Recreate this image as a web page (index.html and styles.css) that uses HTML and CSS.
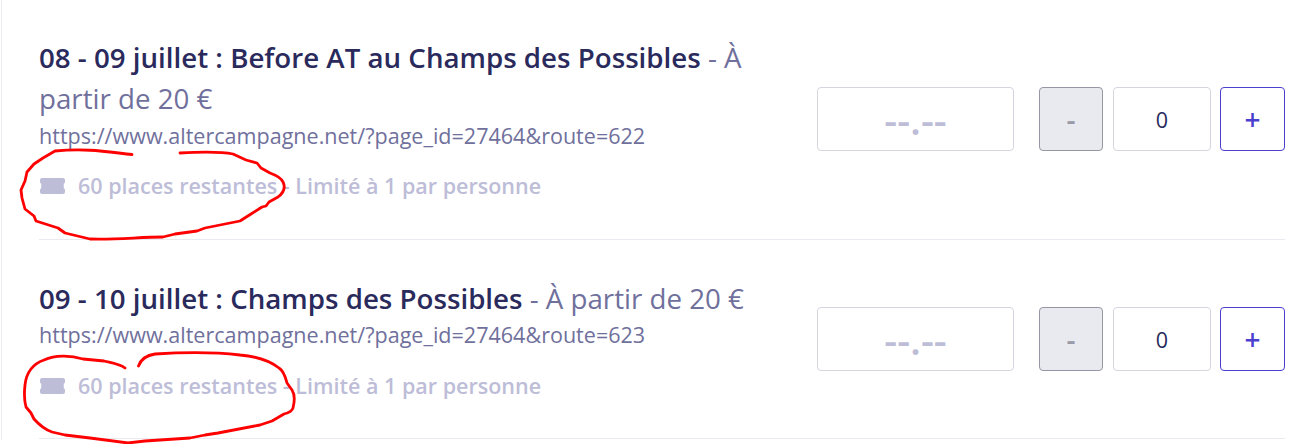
FILE: index.html
```
<!DOCTYPE html>
<html lang="fr">
    <head>
        <meta charset="utf-8">
        <title>Billetterie</title>
        <link rel="stylesheet" href="styles.css">
    </head>
    <body>
        <div class="tickets">
            <div class="ticket first">
                <div class="infos">
                    <div class="title"><strong>08 - 09 juillet : Before AT au Champs des Possibles</strong> - À partir de 20 €</div>
                    <div class="description">https://www.altercampagne.net/?page_id=27464&amp;route=622</div>
                    <div class="stock">
                        <svg class="icon" viewBox="0 0 25 16"><path d="M2 0H23Q25 0 25 2V4.500Q23 5.500 23.800 8Q23 10.500 25 11.500V14Q25 16 23 16H2Q0 16 0 14V11.500Q2 10.500 1.200 8Q2 5.500 0 4.500V2Q0 0 2 0Z"/></svg>
                        <span>60 places restantes - Limité à 1 par personne</span>
                    </div>
                </div>
                <input class="price" type="text" placeholder="--.--">
                <div class="quantity">
                    <button class="minus" type="button" disabled>-</button>
                    <input class="count" type="text" value="0">
                    <button class="plus" type="button">+</button>
                </div>
            </div>
            <div class="ticket">
                <div class="infos">
                    <div class="title"><strong>09 - 10 juillet : Champs des Possibles</strong> - À partir de 20 €</div>
                    <div class="description">https://www.altercampagne.net/?page_id=27464&amp;route=623</div>
                    <div class="stock">
                        <svg class="icon" viewBox="0 0 25 16"><path d="M2 0H23Q25 0 25 2V4.500Q23 5.500 23.800 8Q23 10.500 25 11.500V14Q25 16 23 16H2Q0 16 0 14V11.500Q2 10.500 1.200 8Q2 5.500 0 4.500V2Q0 0 2 0Z"/></svg>
                        <span>60 places restantes - Limité à 1 par personne</span>
                    </div>
                </div>
                <input class="price" type="text" placeholder="--.--">
                <div class="quantity">
                    <button class="minus" type="button" disabled>-</button>
                    <input class="count" type="text" value="0">
                    <button class="plus" type="button">+</button>
                </div>
            </div>
        </div>
        <svg class="marks" viewBox="0 0 1313 444">
            <path d="M132 154.500C108 152 88 148 55 151L43 158L34 164L27 172L25 181L21 190L22 198L25 209L34 216L36 221L58 228L65 233L90 239C115 240 140 237 163 237L175 234L197 231L205 228L240 221L251 214L262 207L266 206L269 202L278 197Q287 190 283 182Q281 177 270 173L261 168L257 163L246 160L233 154Q218 151 180 153"/>
            <path d="M125 368C120 364 112 363 104 361L83 359C70 355 55 355 44 360Q27 366 25 385Q23.500 398 26 407L31 413L34 419Q43 429 52 432L65 435L90 438L128 443L145 441L190 438L205 435L218 433L260 425L272 421L284 414Q292 412 293 408Q296 396 292 390L287 383Q284 371 279 368Q265 357 240 355C215 352 185 352 155 354Q142 356 138.500 366"/>
        </svg>
    </body>
</html>
```
FILE: styles.css
```
* {
    box-sizing: border-box;
}
body {
    margin: 0;
    height: 444px;
    overflow: hidden;
    background: #fff;
    font-family: "Open Sans", sans-serif;
    color: #70709c;
}
.tickets {
    height: 440px;
    margin-left: 1px;
    padding: 0 28px 0 37px;
    border-left: 1px solid #eaeef4;
}
.ticket {
    display: flex;
    align-items: center;
    padding: 38px 0 37.3px;
    border-bottom: 1px solid #e9e9ef;
}
.ticket.first {
    padding: 37px 0 37.9px;
}
.infos {
    width: 720px;
    margin-right: 58px;
}
.title {
    font-size: 27.7px;
    line-height: 41.4px;
}
.title strong {
    font-weight: 600;
    color: #2a2a5c;
}
.description {
    font-size: 21.55px;
    line-height: 32px;
}
.stock {
    display: flex;
    align-items: center;
    gap: 13px;
    margin-top: 19.3px;
    padding-left: 1px;
    font-size: 21.5px;
    font-weight: 600;
    line-height: 30px;
    color: #bdbdd8;
}
.icon {
    width: 25px;
    height: 16px;
    fill: #bdbdd8;
}
input, button {
    height: 64px;
    padding: 0;
    border: 1px solid #d5d5e0;
    border-radius: 4px;
    background: #fff;
    font-family: inherit;
    text-align: center;
}
.price {
    width: 197px;
    font-size: 40px;
    font-weight: 600;
}
.price::placeholder {
    color: #bdbdd8;
}
.quantity {
    display: flex;
    margin-left: 25px;
}
.count {
    width: 98px;
    margin: 0 9px 0 10px;
    font-size: 21.5px;
    color: #2a2a5c;
}
.minus, .plus {
    width: 64px;
    font-size: 28px;
    font-weight: 600;
}
.minus {
    border-color: #9696a5;
    background: #e9eaef;
    color: #9a9ba8;
}
.plus {
    width: 65px;
    border-color: #4b3fcf;
    color: #4b3fcf;
}
/* hand-drawn circles over the remaining seats */
.marks {
    position: absolute;
    top: 0;
    left: 0;
    width: 1313px;
    height: 444px;
    pointer-events: none;
    fill: none;
    stroke: #f00;
    stroke-width: 2.8;
    stroke-linecap: round;
    stroke-linejoin: round;
}
```
